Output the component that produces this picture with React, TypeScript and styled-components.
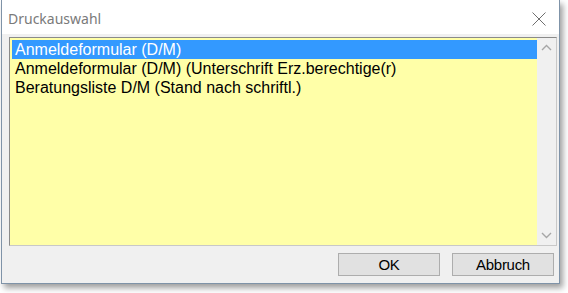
import styled, { createGlobalStyle } from "styled-components";

// GLOBAL
const GlobalStyle = createGlobalStyle`
  html, body {
    margin: 0;
    padding: 0;
    background: #ffffff;
  }
  body {
    width: 568px;
    height: 293px;
    overflow: hidden;
  }
`;

// STYLED COMPONENTS
const Dialog = styled.div`
  margin-left: 1px;
  width: 557px;
  height: 283px;
  display: flex;
  flex-direction: column;
  border: 1px solid #7f93a8;
  border-top: none;
  background: #f0f0f0;
  box-shadow: 3px 4px 6px rgba(0, 0, 0, 0.38);
`;

const TitleBar = styled.div`
  height: 34px;
  flex: none;
  display: flex;
  align-items: center;
  justify-content: space-between;
  padding: 0 13px 0 6px;
  background: #ffffff;
`;

const Title = styled.span`
  font-family: "Noto Sans", "Open Sans", sans-serif;
  font-size: 14px;
  color: #7a7a7a;
  margin-top: 3px;
`;

const CloseBtn = styled.div`
  width: 14px;
  height: 14px;
  margin-top: 3px;
  display: flex;
`;

const Client = styled.div`
  flex: 1;
  display: flex;
  flex-direction: column;
  padding: 3px 2px 0 7px;
`;

const ListBox = styled.div`
  height: 207px;
  display: flex;
  border: 1px solid #8a8a8a;
  border-right-color: #c8c8c8;
  border-bottom-color: #c8c8c8;
  background: #ffffa8;
`;

const Items = styled.ul`
  flex: 1;
  list-style: none;
  margin: 0;
  padding: 2px 0 0 2px;
`;

const Item = styled.li<{ $selected?: boolean }>`
  height: 19px;
  line-height: 19px;
  padding-left: 3px;
  font-family: "Liberation Sans", Arial, sans-serif;
  font-size: 16px;
  white-space: nowrap;
  color: ${(p) => (p.$selected ? "#ffffff" : "#000000")};
  background: ${(p) => (p.$selected ? "#3399ff" : "transparent")};
`;

const ScrollBar = styled.div`
  width: 19px;
  flex: none;
  display: flex;
  flex-direction: column;
  justify-content: space-between;
  align-items: center;
  padding: 6px 0;
  background: #f0f0f0;
`;

const ButtonRow = styled.div`
  display: flex;
  justify-content: flex-end;
  gap: 12px;
  padding: 7px 3px 0 0;
`;

const Button = styled.button`
  width: 102px;
  height: 23px;
  border: 1px solid #adadad;
  background: #e1e1e1;
  font-family: "Liberation Sans", Arial, sans-serif;
  font-size: 15px;
  color: #000;
  padding: 0;
  letter-spacing: -0.3px;
`;

const Chevron = ({ down }: { down?: boolean }) => (
  <svg width="11" height="7" viewBox="0 0 11 7">
    <path
      d={down ? "M1 1 L5.5 5.5 L10 1" : "M1 6 L5.5 1.5 L10 6"}
      fill="none"
      stroke="#a6a6a6"
      strokeWidth="1.4"
    />
  </svg>
);

const items = [
  "Anmeldeformular (D/M)",
  "Anmeldeformular (D/M) (Unterschrift Erz.berechtige(r)",
  "Beratungsliste D/M (Stand nach schriftl.)",
];

export default function App() {
  return (
    <>
      <GlobalStyle />
      <Dialog>
        <TitleBar>
          <Title>Druckauswahl</Title>
          <CloseBtn>
            <svg width="14" height="14" viewBox="0 0 14 14">
              <path d="M0.5 0.5 L13.5 13.5 M13.5 0.5 L0.5 13.5" stroke="#6f6f6f" strokeWidth="1" />
            </svg>
          </CloseBtn>
        </TitleBar>
        <Client>
          <ListBox>
            <Items>
              {items.map((t, i) => (
                <Item key={t} $selected={i === 0}>
                  {t}
                </Item>
              ))}
            </Items>
            <ScrollBar>
              <Chevron />
              <Chevron down />
            </ScrollBar>
          </ListBox>
          <ButtonRow>
            <Button>OK</Button>
            <Button>Abbruch</Button>
          </ButtonRow>
        </Client>
      </Dialog>
    </>
  );
}
